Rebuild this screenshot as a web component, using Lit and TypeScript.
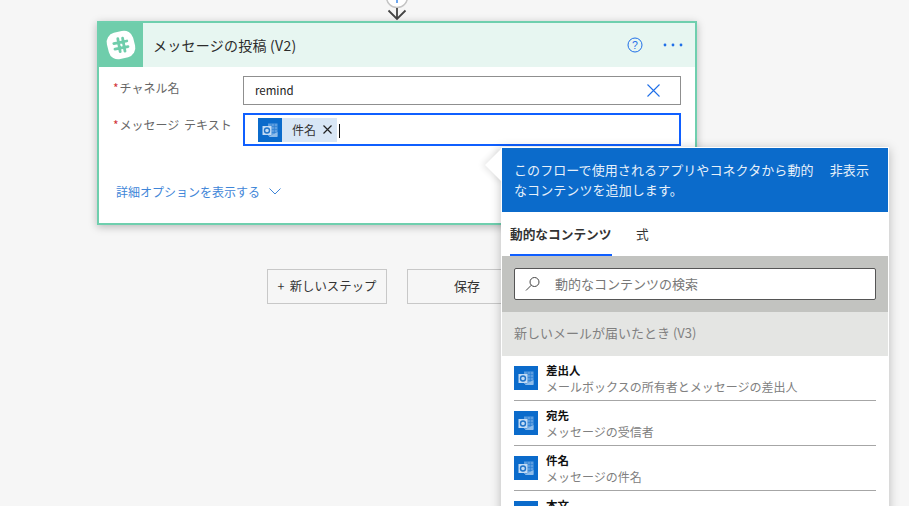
import { LitElement, html, css, svg } from "lit";
import { customElement } from "lit/decorators.js";

const outlook = () => html`<svg class="ol" viewBox="0 0 24 24" width="24" height="24" aria-hidden="true">
  <rect width="24" height="24" fill="#0b6bcb"></rect>
  ${svg`<rect x="10" y="5.5" width="9.5" height="12.5" fill="#5d9ee0"></rect>
  <path d="M10 8.5h9.5M10 11.5h9.5M10 14.5h9.5M13.2 5.5v12.5M16.4 5.5v12.5" stroke="#2c7fd3" stroke-width=".7" fill="none"></path>
  <path d="M11 18.5 L19.5 14 V19 H11Z" fill="#8fbdea"></path>
  <rect x="4.5" y="8" width="9" height="9" fill="#c4dcf4"></rect>
  <circle cx="9" cy="12.5" r="2.5" fill="none" stroke="#2074c9" stroke-width="1.4"></circle>`}
</svg>`;

const items = [
  ["差出人", "メールボックスの所有者とメッセージの差出人"],
  ["宛先", "メッセージの受信者"],
  ["件名", "メッセージの件名"],
  ["本文", "メッセージの本文"],
];

@customElement("app-root")
export class AppRoot extends LitElement {
  static styles = css`
    :host {
      display: block;
      position: relative;
      width: 909px;
      height: 506px;
      overflow: hidden;
      background: #f6f6f6;
      font-family: "Noto Sans CJK JP", "Open Sans", sans-serif;
      color: #333;
      font-size: 12px;
    }
    .canvas {
      display: flex;
      flex-direction: column;
      align-items: flex-start;
      padding-left: 97px;
    }
    .connector {
      width: 600px;
      height: 21px;
      display: flex;
      justify-content: center;
    }
    .card {
      box-sizing: border-box;
      width: 600px;
      height: 204px;
      border: 2px solid #6fcfae;
      background: #fff;
      box-shadow: 0 2px 8px rgba(0, 0, 0, 0.25);
      display: flex;
      flex-direction: column;
    }
    .head {
      display: flex;
      align-items: center;
      height: 44px;
      background: #e7f6f1;
      flex: none;
    }
    .logo {
      width: 44px;
      height: 44px;
      background: #6fcdab;
      display: flex;
      align-items: center;
      justify-content: center;
      flex: none;
    }
    .title {
      margin-left: 10px;
      font-size: 14px;
      letter-spacing: 0.25px;
      color: #2b2b2b;
      flex: 1;
      white-space: nowrap;
    }
    .head-actions {
      display: flex;
      align-items: center;
      gap: 20px;
      padding-right: 12px;
    }
    .form {
      flex: 1;
      display: flex;
      flex-direction: column;
      padding: 9px 14px 0 14px;
    }
    .row {
      display: flex;
      align-items: flex-start;
    }
    .row + .row {
      margin-top: 8px;
    }
    .label {
      width: 130px;
      flex: none;
      color: #666;
      font-size: 12px;
      word-spacing: 2px;
      line-height: 18px;
      padding-top: 3px;
      white-space: nowrap;
    }
    .label i {
      color: #d13438;
      font-style: normal;
      margin-right: 1px;
    }
    .input {
      box-sizing: border-box;
      width: 438px;
      height: 29px;
      border: 1px solid #8f8f8f;
      display: flex;
      align-items: center;
      justify-content: space-between;
      padding: 0 20px 0 11px;
      color: #222;
      font-size: 11.5px;
    }
    .input > span {
      margin-top: -2px;
    }
    .input.focus {
      height: 33px;
      border: 2px solid #0f5fff;
      justify-content: flex-start;
      padding: 0 0 0 13px;
    }
    .chip {
      display: flex;
      align-items: center;
      height: 24px;
      background: #d8e6f5;
      font-size: 12px;
      color: #333;
      padding-right: 5px;
    }
    .chip span {
      margin-left: 10px;
      margin-right: 7px;
    }
    .caret {
      width: 1px;
      height: 14px;
      background: #111;
      margin: 3px 0 0 2px;
    }
    .more {
      display: flex;
      align-items: center;
      gap: 9px;
      margin-top: 37px;
      margin-left: 3px;
      color: #3f86d8;
      font-size: 12px;
    }
    .steps {
      display: flex;
      gap: 20px;
      margin: 44px 0 0 170px;
    }
    .btn {
      box-sizing: border-box;
      height: 35px;
      padding-bottom: 2px;
      border: 1px solid #c8c8c8;
      display: flex;
      align-items: center;
      justify-content: center;
      font-size: 12.4px;
      word-spacing: 2.5px;
      color: #333;
      white-space: nowrap;
    }
    .btn.new {
      width: 120px;
    }
    .btn.save {
      width: 120px;
      font-size: 13px;
    }
    .panel {
      position: absolute;
      left: 501px;
      top: 147px;
      width: 388px;
      box-sizing: border-box;
      height: 380px;
      border: 1px solid #fff;
      background: #fff;
      box-shadow: 0 2px 10px rgba(0, 0, 0, 0.25);
    }
    .arrow {
      position: absolute;
      left: -12px;
      top: 5px;
      width: 24px;
      height: 24px;
      background: #fff;
      transform: rotate(45deg);
      box-shadow: -2px 2px 6px rgba(0, 0, 0, 0.1);
    }
    .panel-body {
      position: relative;
    }
    .banner {
      box-sizing: border-box;
      height: 64px;
      background: #0b6bcb;
      color: #e6f0fa;
      display: flex;
      justify-content: space-between;
      padding: 12px 19px 0 12px;
      font-size: 13px;
      letter-spacing: 0.08px;
      line-height: 20px;
    }
    .banner p {
      margin: 0;
      width: 302px;
    }
    .banner b {
      font-weight: 400;
      white-space: nowrap;
    }
    .tabs {
      display: flex;
      gap: 24px;
      height: 44px;
      padding-left: 8px;
      box-sizing: border-box;
      font-size: 12.7px;
      color: #333;
    }
    .tab {
      display: flex;
      align-items: center;
      height: 44px;
      box-sizing: border-box;
      padding-bottom: 2px;
    }
    .tab.on {
      font-weight: 700;
      width: 102px;
      white-space: nowrap;
      padding-bottom: 0;
      border-bottom: 2px solid #0f5fff;
    }
    .search-wrap {
      height: 56px;
      background: #c2c3c0;
      box-sizing: border-box;
      padding: 12px;
    }
    .search {
      box-sizing: border-box;
      height: 32px;
      background: #fff;
      border: 1px solid #555;
      border-radius: 2px;
      display: flex;
      align-items: center;
      padding: 0 0 2px 10px;
      gap: 14px;
      color: #777;
      font-size: 13px;
    }
    .search svg {
      margin-top: 2px;
    }
    .section {
      height: 44px;
      background: #e4e5e3;
      color: #808080;
      display: flex;
      align-items: center;
      padding: 0 0 3px 12px;
      box-sizing: border-box;
      font-size: 13px;
    }
    .list {
      padding: 0 12px;
    }
    .item {
      display: flex;
      box-sizing: border-box;
      height: 45px;
      gap: 8px;
      padding-top: 7px;
      border-bottom: 1px solid #a6a6a6;
    }
    .item .ol {
      margin-top: 3px;
      flex: none;
    }
    .item-text {
      display: flex;
      flex-direction: column;
    }
    .item-text strong {
      font-size: 11.5px;
      line-height: 15px;
      color: #111;
      font-weight: 700;
    }
    .item-text small {
      font-size: 12px;
      line-height: 17px;
      color: #808080;
    }
  `;

  render() {
    return html`
      <div class="canvas">
        <div class="connector">
          <svg width="26" height="21" viewBox="0 0 26 21" aria-hidden="true">
            <circle cx="13" cy="-3" r="10.5" fill="#fff" stroke="#c4c4c4" stroke-width="1.5"></circle>
            <path d="M13 -1v4" stroke="#6ea8f0" stroke-width="2"></path>
            <path d="M13 8v11M4.5 10.5L13 19l8.5-8.5" fill="none" stroke="#444" stroke-width="1.8"></path>
          </svg>
        </div>
        <div class="card">
          <div class="head">
            <div class="logo">
              <svg width="36" height="36" viewBox="0 0 36 36" aria-hidden="true">
                <rect x="4.5" y="4.5" width="27" height="27" rx="9.5" fill="#fff" transform="rotate(-14 18 18)"></rect>
                <path d="M15.6 11.5l2.4 13M20.4 11l2.4 13M11.6 16.4l13-2.6M12.8 22l13-2.6" transform="translate(-.8 .2)" stroke="#6fcdab" stroke-width="2.8" stroke-linecap="round" fill="none"></path>
              </svg>
            </div>
            <div class="title">メッセージの投稿 (V2)</div>
            <div class="head-actions">
              <svg width="16" height="16" viewBox="0 0 16 16" aria-hidden="true">
                <circle cx="8" cy="8" r="7" fill="none" stroke="#1f6fe8" stroke-width="1"></circle>
                <text x="8" y="11.6" text-anchor="middle" font-size="10.5" fill="#1f6fe8" font-family="Liberation Sans">?</text>
              </svg>
              <svg width="20" height="4" viewBox="0 0 20 4" aria-hidden="true">
                <circle cx="2" cy="2" r="1.4" fill="#1f6fe8"></circle>
                <circle cx="10" cy="2" r="1.4" fill="#1f6fe8"></circle>
                <circle cx="18" cy="2" r="1.4" fill="#1f6fe8"></circle>
              </svg>
            </div>
          </div>
          <div class="form">
            <div class="row">
              <div class="label"><i>*</i>チャネル名</div>
              <div class="input">
                <span>remind</span>
                <svg width="13" height="13" viewBox="0 0 13 13" aria-hidden="true">
                  <path d="M.5.5l12 12M12.5.5l-12 12" stroke="#1f6fe8" stroke-width="1.1"></path>
                </svg>
              </div>
            </div>
            <div class="row">
              <div class="label"><i>*</i>メッセージ テキスト</div>
              <div class="input focus">
                <div class="chip">
                  ${outlook()}
                  <span>件名</span>
                  <svg width="9" height="9" viewBox="0 0 9 9" aria-hidden="true">
                    <path d="M.5.5l8 8M8.5.5l-8 8" stroke="#222" stroke-width="1.2"></path>
                  </svg>
                </div>
                <div class="caret"></div>
              </div>
            </div>
            <div class="more">
              <span>詳細オプションを表示する</span>
              <svg width="12" height="7" viewBox="0 0 12 7" aria-hidden="true">
                <path d="M.5.5L6 6l5.5-5.5" fill="none" stroke="#3f86d8" stroke-width="1"></path>
              </svg>
            </div>
          </div>
        </div>
        <div class="steps">
          <div class="btn new">+ 新しいステップ</div>
          <div class="btn save">保存</div>
        </div>
      </div>
      <div class="panel">
        <div class="arrow"></div>
        <div class="panel-body">
          <div class="banner">
            <p>このフローで使用されるアプリやコネクタから動的なコンテンツを追加します。</p>
            <b>非表示</b>
          </div>
          <div class="tabs">
            <div class="tab on">動的なコンテンツ</div>
            <div class="tab">式</div>
          </div>
          <div class="search-wrap">
            <div class="search">
              <svg width="16" height="16" viewBox="0 0 16 16" aria-hidden="true">
                <circle cx="9.5" cy="6" r="4.5" fill="none" stroke="#444" stroke-width="1"></circle>
                <path d="M6.3 9.2L1 14.5" stroke="#444" stroke-width="1"></path>
              </svg>
              <span>動的なコンテンツの検索</span>
            </div>
          </div>
          <div class="section">新しいメールが届いたとき (V3)</div>
          <div class="list">
            ${items.map(
              ([a, b]) => html`<div class="item">
                ${outlook()}
                <div class="item-text"><strong>${a}</strong><small>${b}</small></div>
              </div>`
            )}
          </div>
        </div>
      </div>
    `;
  }
}
